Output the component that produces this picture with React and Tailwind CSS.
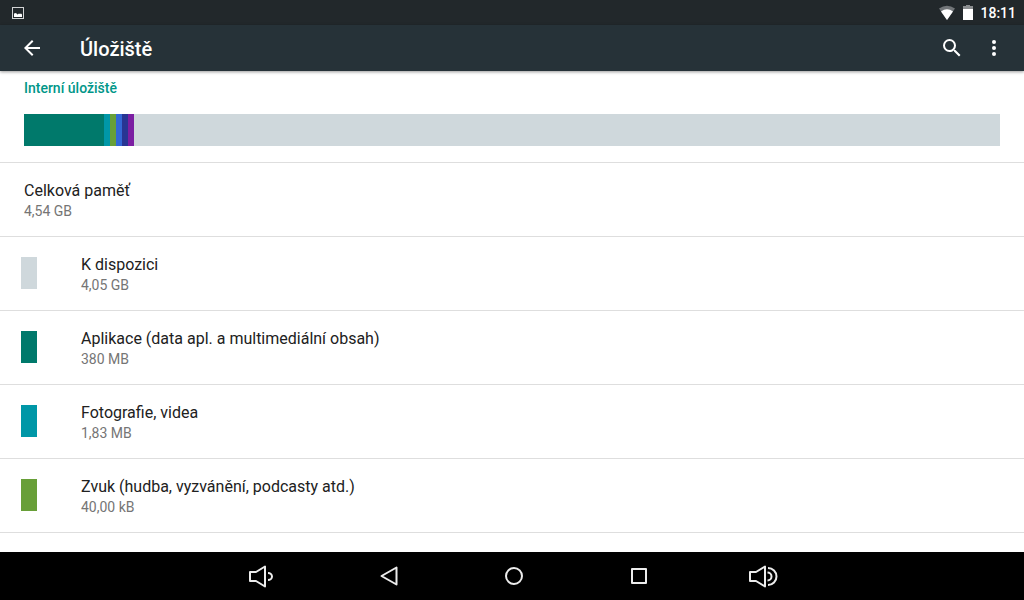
import React from "react";

const usage = [
    { id: "apps", share: 80, color: "bg-[#00796b]" },
    { id: "photos", share: 6, color: "bg-[#0097a7]" },
    { id: "audio", share: 6, color: "bg-[#689f38]" },
    { id: "downloads", share: 6, color: "bg-[#3367d6]" },
    { id: "cache", share: 6, color: "bg-[#283593]" },
    { id: "misc", share: 6, color: "bg-[#7b1fa2]" },
    { id: "free", share: 866, color: "bg-[#cfd8dc]" },
];

const items = [
    { title: "Celková paměť", value: "4,54 GB" },
    { title: "K dispozici", value: "4,05 GB", color: "bg-[#cfd8dc]" },
    { title: "Aplikace (data apl. a multimediální obsah)", value: "380 MB", color: "bg-[#00796b]" },
    { title: "Fotografie, videa", value: "1,83 MB", color: "bg-[#0097a7]" },
    { title: "Zvuk (hudba, vyzvánění, podcasty atd.)", value: "40,00 kB", color: "bg-[#689f38]" },
];

const StatusBar = () => (
    <div className="flex h-[25px] shrink-0 items-center justify-between bg-[#22282b] pl-3 pr-2">
        <svg className="h-3 w-3" viewBox="0 0 12 12">
            <rect x="0.5" y="0.5" width="11" height="11" fill="none" stroke="#d3d4d5" />
            <path d="M2 10V6.5L4 6l1.5 1.5L7 6.5l1 .5L9 6.5l1 1V10z" fill="#fff" />
        </svg>
        <div className="flex items-center text-white">
            <svg className="mr-2 h-4 w-4" viewBox="0 0 16 16">
                <path d="M0 3.5Q8-2 16 3.5L8 15z" fill="#717578" />
                <path d="M2 6.5Q8 2 14 6.5L8 15z" fill="#fff" />
            </svg>
            <svg className="mr-[7px] h-4 w-[10px]" viewBox="0 0 10 16">
                <path d="M3 0h4v1h3v3H0V1h3z" fill="#8a8d8f" />
                <path d="M0 4h10v11H0z" fill="#fff" />
            </svg>
            <time className="text-sm font-medium">18:11</time>
        </div>
    </div>
);

const AppBar = () => (
    <header className="z-10 flex h-[46px] shrink-0 items-center bg-[#263238] pl-5 pr-[18px] text-white shadow-[0_1px_3px_rgba(0,0,0,0.4)]">
        <button type="button" aria-label="Zpět" className="mr-9">
            <svg className="h-6 w-6" viewBox="0 0 24 24" fill="currentColor">
                <path d="M20 11H7.83l5.59-5.59L12 4l-8 8 8 8 1.41-1.41L7.83 13H20v-2z" />
            </svg>
        </button>
        <h1 className="flex-1 pt-px text-xl font-medium">Úložiště</h1>
        <button type="button" aria-label="Hledat" className="mr-[18px]">
            <svg className="h-6 w-6" viewBox="0 0 24 24" fill="currentColor">
                <path d="M15.5 14h-.79l-.28-.27A6.471 6.471 0 0 0 16 9.5 6.5 6.5 0 1 0 9.5 16c1.61 0 3.09-.59 4.23-1.57l.27.28v.79l5 4.99L20.49 19l-4.99-5zm-6 0C7.01 14 5 11.99 5 9.5S7.01 5 9.5 5 14 7.01 14 9.5 11.99 14 9.5 14z" />
            </svg>
        </button>
        <button type="button" aria-label="Další možnosti">
            <svg className="h-6 w-6" viewBox="0 0 24 24" fill="currentColor">
                <circle cx="12" cy="6" r="2" />
                <circle cx="12" cy="12" r="2" />
                <circle cx="12" cy="18" r="2" />
            </svg>
        </button>
    </header>
);

const StorageRow = ({ title, value, color }) => (
    <li className="border-b border-[#dedede]">
        <button type="button" className={`flex w-full items-center pb-[17px] pt-4 text-left ${color ? "pl-[21px]" : "pl-6"}`}>
            {color && <span className={`mr-11 h-8 w-4 ${color}`} />}
            <span>
                <span className="block text-base leading-6 text-[#212121]">{title}</span>
                <span className="block text-sm leading-4 text-[#757575]">{value}</span>
            </span>
        </button>
    </li>
);

const NavButton = ({ label, children }) => (
    <button type="button" aria-label={label} className="flex w-[125px] items-center justify-center">
        <svg className="h-8 w-8" viewBox="0 0 32 32" fill="none" stroke="#ececec" strokeWidth="2" strokeLinejoin="round">
            {children}
        </svg>
    </button>
);

const NavBar = () => (
    <nav className="flex h-12 shrink-0 justify-center bg-black pl-1">
        <NavButton label="Snížit hlasitost">
            <path d="M2 12h6l9-5.500v20L8 21H2z" />
            <path d="M20 13a4 3.5 0 0 1 0 7" />
        </NavButton>
        <NavButton label="Zpět">
            <path d="M8.5 16L23.5 7.5v17z" />
        </NavButton>
        <NavButton label="Domů">
            <circle cx="16" cy="16" r="8" />
        </NavButton>
        <NavButton label="Přehled">
            <rect x="9" y="9" width="14" height="14" />
        </NavButton>
        <NavButton label="Zvýšit hlasitost">
            <path d="M2 12h6l9-5.500v20L8 21H2z" />
            <path d="M19.5 12.5a4 4 0 0 1 0 8" />
            <path d="M20 8a8.5 8.5 0 0 1 0 17" />
        </NavButton>
    </nav>
);

const App = () => (
    <div className="flex h-screen flex-col bg-white font-['Roboto',sans-serif]">
        <StatusBar />
        <AppBar />
        <main className="min-h-0 flex-1 overflow-hidden">
            <section className="border-b border-[#dedede] px-6 pb-4 pt-[7px]">
                <h2 className="text-sm font-medium text-[#009688]">Interní úložiště</h2>
                <div className="mt-4 flex h-8">
                    {usage.map((part) => (
                        <div key={part.id} className={part.color} style={{ flexGrow: part.share }} />
                    ))}
                </div>
            </section>
            <ul>
                {items.map((item) => (
                    <StorageRow key={item.title} {...item} />
                ))}
            </ul>
        </main>
        <NavBar />
    </div>
);

export default App;
